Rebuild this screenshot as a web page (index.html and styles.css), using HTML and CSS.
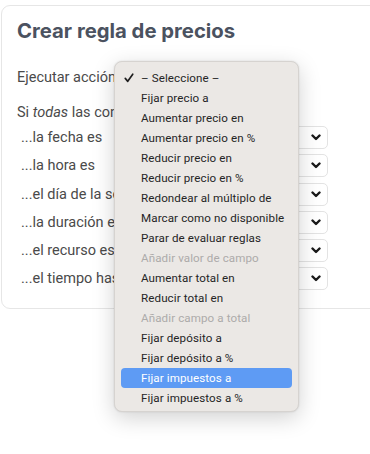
FILE: index.html
```html
<!DOCTYPE html>
<html lang="es">
<head>
<meta charset="utf-8">
<title>Crear regla de precios</title>
<link rel="stylesheet" href="styles.css">
</head>
<body>
<div class="card">
  <h1 class="title">Crear regla de precios</h1>
  <div class="action-row">
    <span class="label">Ejecutar acción</span>
  </div>
  <p class="intro">Si <em>todas</em> las condiciones se cumplen:</p>
  <div class="conds">
    <div class="cond"><span class="cond-label">...la fecha es</span><div class="select"><svg class="chev" viewBox="0 0 10 7"><path d="M1.5 1.5 L5 5 L8.5 1.5" /></svg></div></div>
    <div class="cond"><span class="cond-label">...la hora es</span><div class="select"><svg class="chev" viewBox="0 0 10 7"><path d="M1.5 1.5 L5 5 L8.5 1.5" /></svg></div></div>
    <div class="cond"><span class="cond-label">...el día de la semana es</span><div class="select"><svg class="chev" viewBox="0 0 10 7"><path d="M1.5 1.5 L5 5 L8.5 1.5" /></svg></div></div>
    <div class="cond"><span class="cond-label">...la duración es</span><div class="select"><svg class="chev" viewBox="0 0 10 7"><path d="M1.5 1.5 L5 5 L8.5 1.5" /></svg></div></div>
    <div class="cond"><span class="cond-label">...el recurso es</span><div class="select"><svg class="chev" viewBox="0 0 10 7"><path d="M1.5 1.5 L5 5 L8.5 1.5" /></svg></div></div>
    <div class="cond"><span class="cond-label">...el tiempo hasta</span><div class="select"><svg class="chev" viewBox="0 0 10 7"><path d="M1.5 1.5 L5 5 L8.5 1.5" /></svg></div></div>
  </div>
</div>

<div class="menu">
  <div class="item checked"><svg class="check" viewBox="0 0 12 12"><path d="M1.5 6.5 L4.5 10 L10.5 1.5" /></svg>– Seleccione –</div>
  <div class="item">Fijar precio a</div>
  <div class="item">Aumentar precio en</div>
  <div class="item">Aumentar precio en %</div>
  <div class="item">Reducir precio en</div>
  <div class="item">Reducir precio en %</div>
  <div class="item">Redondear al múltiplo de</div>
  <div class="item">Marcar como no disponible</div>
  <div class="item">Parar de evaluar reglas</div>
  <div class="item disabled">Añadir valor de campo</div>
  <div class="item">Aumentar total en</div>
  <div class="item">Reducir total en</div>
  <div class="item disabled">Añadir campo a total</div>
  <div class="item">Fijar depósito a</div>
  <div class="item">Fijar depósito a %</div>
  <div class="item active">Fijar impuestos a</div>
  <div class="item">Fijar impuestos a %</div>
</div>
</body>
</html>
```

FILE: styles.css
```css
html, body {
  margin: 0;
  padding: 0;
  background: #ffffff;
  overflow: hidden;
}

body {
  width: 370px;
  height: 454px;
  position: relative;
  font-family: Roboto, "Liberation Sans", sans-serif;
  color: #4a4a4a;
}

.card {
  margin: 5px 0 0 1px;
  width: 380px;
  box-sizing: border-box;
  border: 1px solid #e6e6e6;
  border-radius: 9px;
  padding: 11px 52px 18px 15px;
  background: #fff;
}

.title {
  margin: 0;
  font-family: Inter, Roboto, sans-serif;
  font-size: 20.3px;
  line-height: 28px;
  font-weight: 700;
  color: #4b5260;
}

.action-row {
  margin-top: 21px;
  height: 22px;
  display: flex;
  align-items: center;
  font-size: 14.5px;
}

.intro {
  margin: 14px 0 0 0;
  font-size: 14.5px;
  line-height: 22px;
}

.conds {
  margin-top: 2px;
  display: flex;
  flex-direction: column;
  gap: 5.3px;
}

.cond {
  display: flex;
  align-items: center;
  justify-content: space-between;
  height: 23px;
  padding-left: 4px;
  font-size: 14.5px;
}

.cond-label {
  white-space: nowrap;
  flex: 1;
  min-width: 0;
}

.select {
  width: 140px;
  height: 23px;
  box-sizing: border-box;
  border: 1px solid #e3e3e3;
  border-radius: 5px;
  background: #fff;
  display: flex;
  align-items: center;
  justify-content: flex-end;
  padding-right: 6px;
  flex-shrink: 0;
}

.chev {
  width: 10px;
  height: 7px;
  fill: none;
  stroke: #1a1a1a;
  stroke-width: 2.4;
  stroke-linecap: round;
  stroke-linejoin: round;
}

.menu {
  position: absolute;
  left: 114px;
  top: 61px;
  width: 185px;
  height: 351px;
  box-sizing: border-box;
  padding: 6px 6px 5px 6px;
  background: #ebe8e5;
  border: 1px solid #d6d3d0;
  border-radius: 8px;
  box-shadow: 0 6px 22px rgba(0, 0, 0, 0.18), 0 0 2px rgba(0, 0, 0, 0.12);
  font-family: Roboto, "Liberation Sans", sans-serif;
  font-size: 11.6px;
  color: #252525;
}

.item {
  position: relative;
  height: 20px;
  line-height: 20px;
  padding-left: 20px;
  border-radius: 4px;
  white-space: nowrap;
  letter-spacing: 0.1px;
}

.item.disabled {
  color: #adabaa;
}

.item.active {
  background: #5e9bf4;
  color: #ffffff;
}

.check {
  position: absolute;
  left: 3px;
  top: 4.5px;
  width: 10px;
  height: 10px;
  fill: none;
  stroke: #1e1e1e;
  stroke-width: 2;
  stroke-linecap: round;
  stroke-linejoin: round;
}
```
